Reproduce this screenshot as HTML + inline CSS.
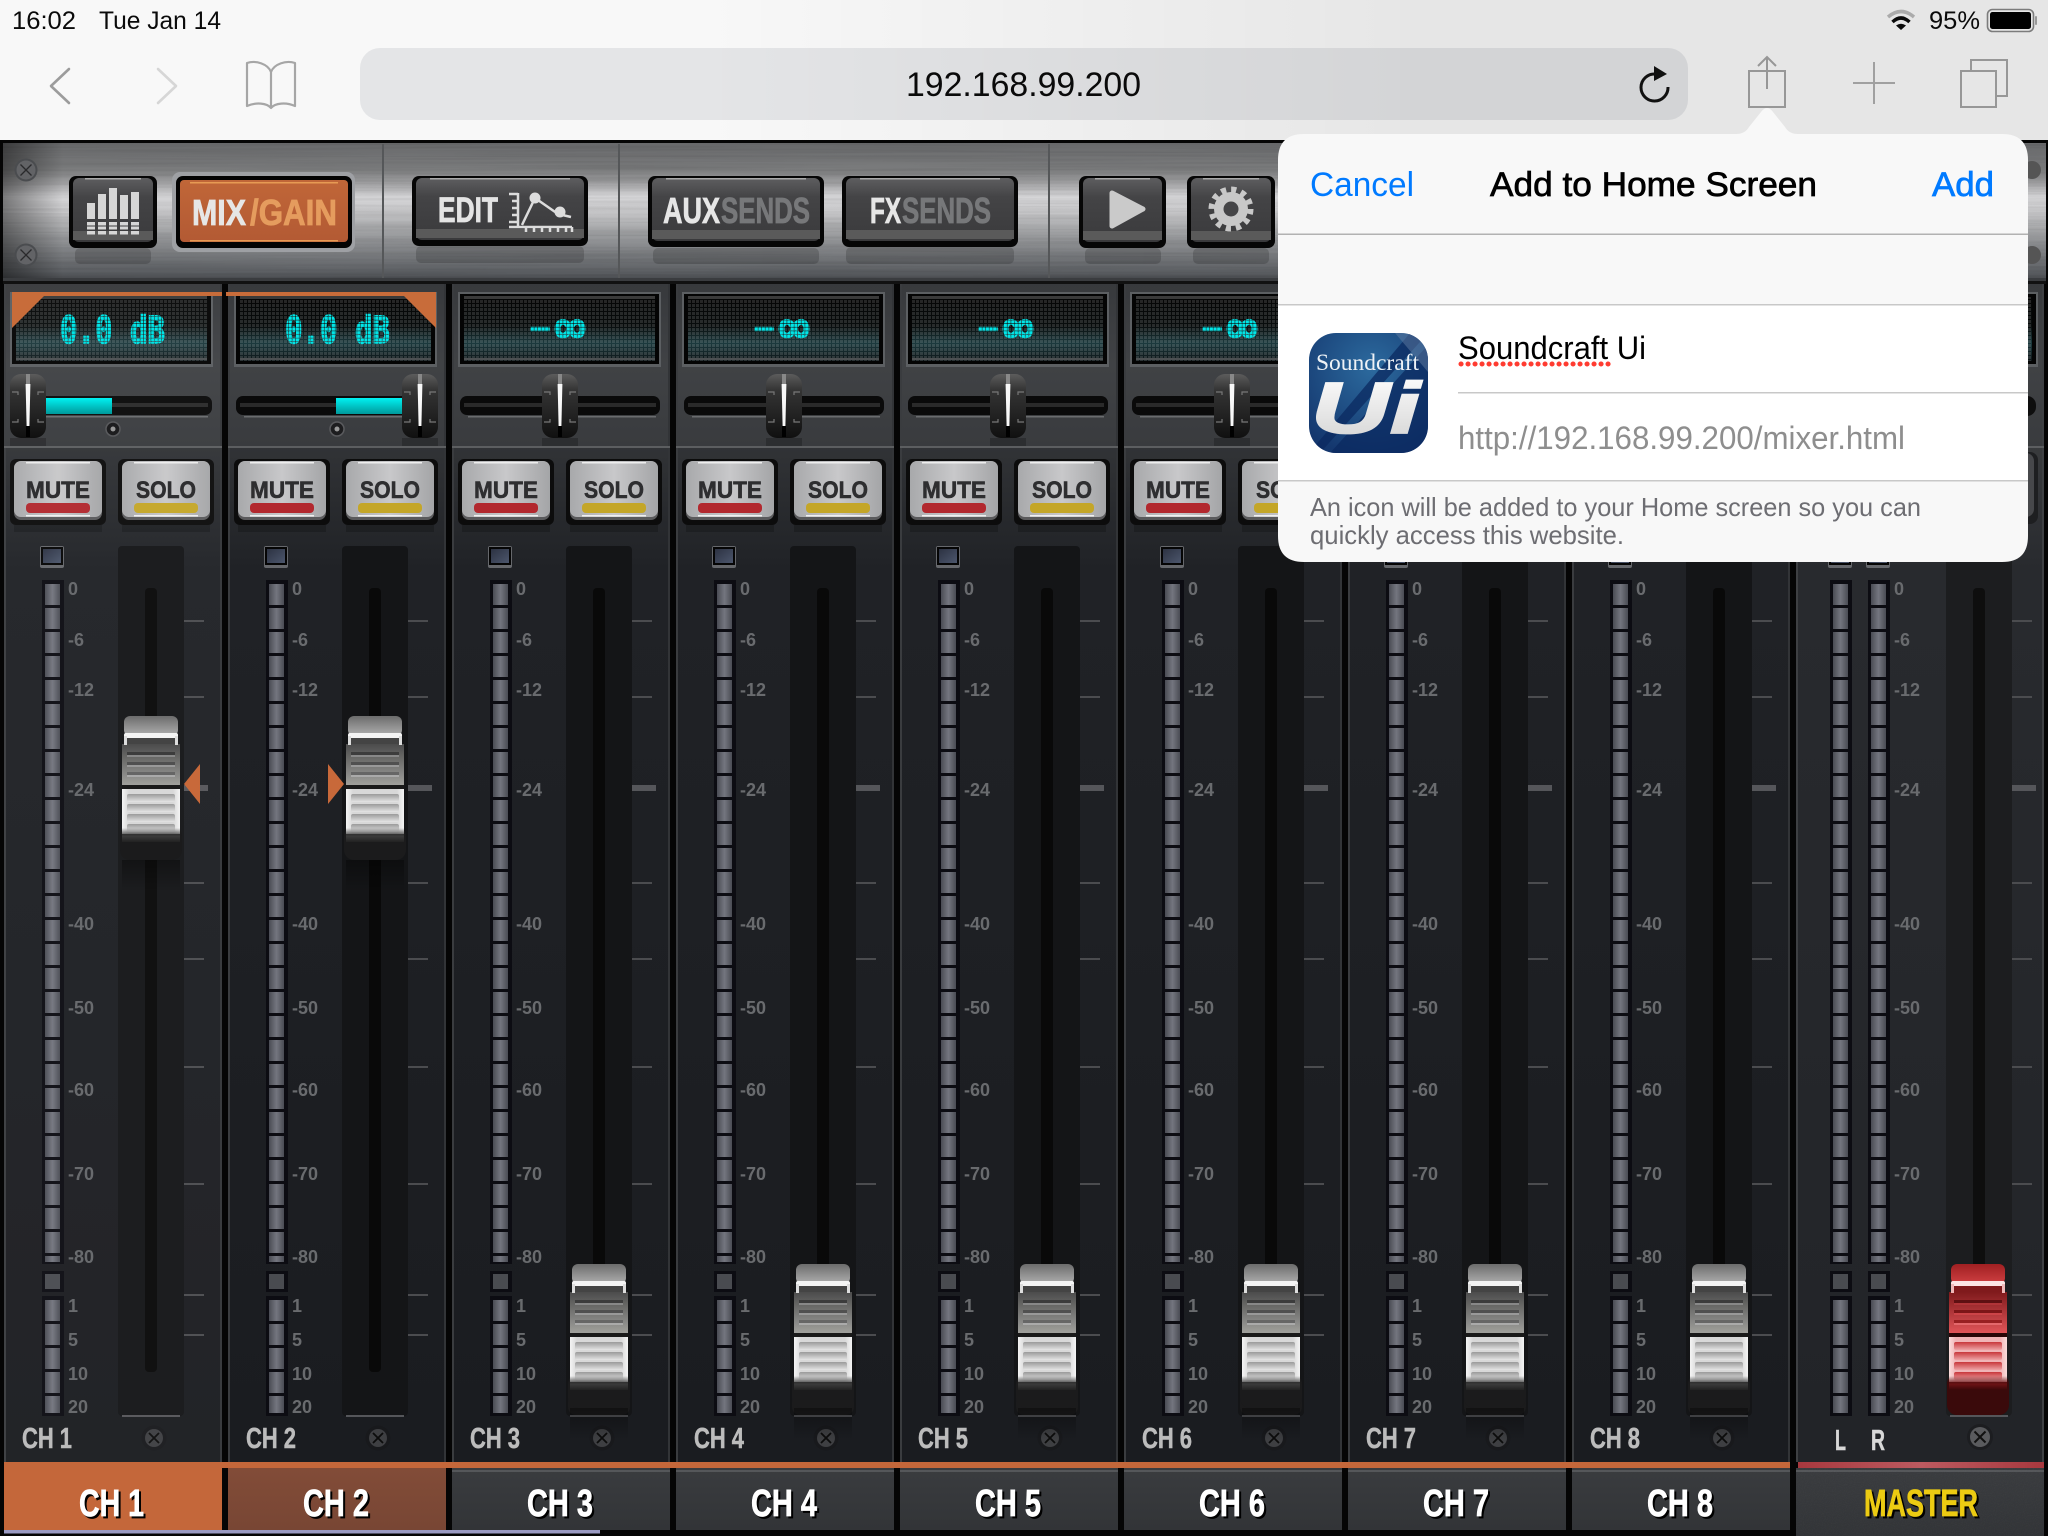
<!DOCTYPE html>
<html lang="en"><head><meta charset="utf-8"><title>Soundcraft Ui</title>
<style>
html,body{margin:0;padding:0;background:#050505;width:2048px;height:1536px;overflow:hidden}
svg{display:block}
text{font-family:"Liberation Sans",sans-serif}
.n{font-family:"Liberation Sans Narrow","Liberation Sans",sans-serif;font-weight:700}
.s{font-weight:700;font-size:18px;fill:#696b6e}
.mu{font-weight:700;font-size:24px;fill:#2e2e30;stroke:#2e2e30;stroke-width:.6}
.lb{font-size:29px;fill:#bcbcbc;stroke:#bcbcbc;stroke-width:.5}
.tb{font-size:38px;fill:#fff;stroke:#fff;stroke-width:.7;filter:drop-shadow(2.5px 2.5px 0 #000)}
.lcd{font-family:"DejaVu Sans Mono","Liberation Mono",monospace;font-weight:700;fill:url(#dots);stroke:url(#dots);stroke-width:1.4}
.hb{font-size:36px;stroke-width:.8}
</style></head><body>
<svg xmlns="http://www.w3.org/2000/svg" width="2048" height="1536" viewBox="0 0 2048 1536">
<defs>
<linearGradient id="metal" x1="0" y1="0" x2="0" y2="1"><stop offset="0" stop-color="#68696b"/><stop offset=".2" stop-color="#7c7d7e"/><stop offset=".3" stop-color="#a4a4a6"/><stop offset=".39" stop-color="#d6d6d8"/><stop offset=".5" stop-color="#c8c8ca"/><stop offset=".62" stop-color="#a8a9ab"/><stop offset=".76" stop-color="#86888b"/><stop offset=".95" stop-color="#5a5d61"/><stop offset="1" stop-color="#46484c"/></linearGradient>
<linearGradient id="metalL" x1="0" y1="0" x2="1" y2="0"><stop offset="0" stop-color="#000" stop-opacity=".42"/><stop offset="1" stop-color="#000" stop-opacity="0"/></linearGradient>
<linearGradient id="dim" x1="0" y1="0" x2="1" y2="0"><stop offset="0" stop-color="#000" stop-opacity="0"/><stop offset="1" stop-color="#000" stop-opacity=".07"/></linearGradient>
<filter id="brush" x="0" y="0" width="100%" height="100%"><feTurbulence type="fractalNoise" baseFrequency=".004 .45" numOctaves="2" seed="4"/><feColorMatrix values="0 0 0 0 0 0 0 0 0 0 0 0 0 0 0 1.6 0 0 0 -.55"/></filter>
<filter id="grain" x="0" y="0" width="100%" height="100%"><feTurbulence type="fractalNoise" baseFrequency=".9" numOctaves="2" seed="2"/><feColorMatrix values="0 0 0 0 1 0 0 0 0 1 0 0 0 0 1 .9 0 0 0 -.35"/></filter>
<linearGradient id="btn" x1="0" y1="0" x2="0" y2="1"><stop offset="0" stop-color="#5e5e60"/><stop offset=".3" stop-color="#444446"/><stop offset="1" stop-color="#3a3a3c"/></linearGradient>
<linearGradient id="btnO" x1="0" y1="0" x2="0" y2="1"><stop offset="0" stop-color="#c06638"/><stop offset="1" stop-color="#b35a34"/></linearGradient>
<linearGradient id="topbg" x1="0" y1="0" x2="0" y2="1"><stop offset="0" stop-color="#37393c"/><stop offset=".5" stop-color="#404245"/><stop offset="1" stop-color="#393b3e"/></linearGradient>
<linearGradient id="botbg" x1="0" y1="0" x2="0" y2="1"><stop offset="0" stop-color="#313336"/><stop offset=".12" stop-color="#202226"/><stop offset="1" stop-color="#1a1c20"/></linearGradient>
<linearGradient id="lcdg" x1="0" y1="0" x2="0" y2="1"><stop offset="0" stop-color="#050505"/><stop offset=".45" stop-color="#080c0c"/><stop offset=".72" stop-color="#1c3a3e"/><stop offset="1" stop-color="#0c1315"/></linearGradient>
<pattern id="grid" width="4" height="4" patternUnits="userSpaceOnUse"><rect width="3" height="3" fill="#fff" opacity=".13"/></pattern>
<pattern id="dots" width="3.6" height="3.6" patternUnits="userSpaceOnUse"><rect width="3" height="3" fill="#00e6e8"/></pattern>
<linearGradient id="cy" x1="0" y1="0" x2="0" y2="1"><stop offset="0" stop-color="#00f2f2"/><stop offset="1" stop-color="#00999b"/></linearGradient>
<linearGradient id="silver" x1="0" y1="0" x2="1" y2="0"><stop offset="0" stop-color="#a8a9ab"/><stop offset=".5" stop-color="#c8c8ca"/><stop offset="1" stop-color="#a4a5a7"/></linearGradient>
<linearGradient id="kn" x1="0" y1="0" x2="0" y2="1"><stop offset="0" stop-color="#5c5c5c"/><stop offset=".25" stop-color="#343434"/><stop offset=".6" stop-color="#242424"/><stop offset="1" stop-color="#101010"/></linearGradient>
<linearGradient id="mt" x1="0" y1="0" x2="1" y2="0"><stop offset="0" stop-color="#4a4c54"/><stop offset=".5" stop-color="#74767f"/><stop offset="1" stop-color="#4a4c54"/></linearGradient>
<pattern id="seg" x="45" y="584" width="15" height="24" patternUnits="userSpaceOnUse"><rect width="15" height="21" fill="url(#mt)"/></pattern>
<pattern id="seg2" x="45" y="1300" width="15" height="24" patternUnits="userSpaceOnUse"><rect width="15" height="21" fill="url(#mt)"/></pattern>
<linearGradient id="led" x1="0" y1="0" x2="1" y2="1"><stop offset="0" stop-color="#2c3242"/><stop offset="1" stop-color="#4c566c"/></linearGradient>
<linearGradient id="kc" x1="0" y1="0" x2="0" y2="1"><stop offset="0" stop-color="#6c6c6c"/><stop offset="1" stop-color="#b0b0b0"/></linearGradient>
<linearGradient id="ku" x1="0" y1="0" x2="0" y2="1"><stop offset="0" stop-color="#4c4c4c"/><stop offset="1" stop-color="#a0a09c"/></linearGradient>
<linearGradient id="kl" x1="0" y1="0" x2="1" y2="0"><stop offset="0" stop-color="#f4f4f4"/><stop offset=".12" stop-color="#d8d8d8"/><stop offset=".88" stop-color="#d8d8d8"/><stop offset="1" stop-color="#f4f4f4"/></linearGradient>
<linearGradient id="kr" x1="0" y1="0" x2="0" y2="1"><stop offset="0" stop-color="#9a9a9a"/><stop offset="1" stop-color="#e4e4e4"/></linearGradient>
<linearGradient id="kf" x1="0" y1="0" x2="0" y2="1"><stop offset="0" stop-color="#333" stop-opacity="0"/><stop offset=".6" stop-color="#3a3a3a"/><stop offset="1" stop-color="#222"/></linearGradient>
<linearGradient id="ks" x1="0" y1="0" x2="0" y2="1"><stop offset="0" stop-color="#000" stop-opacity=".35"/><stop offset="1" stop-color="#000" stop-opacity="0"/></linearGradient>
<linearGradient id="rc" x1="0" y1="0" x2="0" y2="1"><stop offset="0" stop-color="#a02022"/><stop offset="1" stop-color="#d04042"/></linearGradient>
<linearGradient id="ru" x1="0" y1="0" x2="0" y2="1"><stop offset="0" stop-color="#801a1c"/><stop offset="1" stop-color="#e05458"/></linearGradient>
<linearGradient id="rl" x1="0" y1="0" x2="1" y2="0"><stop offset="0" stop-color="#fbdcdc"/><stop offset=".12" stop-color="#f0b4b6"/><stop offset=".88" stop-color="#f0b4b6"/><stop offset="1" stop-color="#fbdcdc"/></linearGradient>
<linearGradient id="rr" x1="0" y1="0" x2="0" y2="1"><stop offset="0" stop-color="#c8373b"/><stop offset="1" stop-color="#eea4a6"/></linearGradient>
<linearGradient id="rf" x1="0" y1="0" x2="0" y2="1"><stop offset="0" stop-color="#5a1012" stop-opacity="0"/><stop offset=".6" stop-color="#6a1214"/><stop offset="1" stop-color="#3a0809"/></linearGradient>
<linearGradient id="tab" x1="0" y1="0" x2="0" y2="1"><stop offset="0" stop-color="#3a3c3f"/><stop offset="1" stop-color="#323437"/></linearGradient>
<linearGradient id="tab2" x1="0" y1="0" x2="0" y2="1"><stop offset="0" stop-color="#824c38"/><stop offset="1" stop-color="#784634"/></linearGradient>
<linearGradient id="redb" x1="0" y1="0" x2="1" y2="0"><stop offset="0" stop-color="#a8383e"/><stop offset=".5" stop-color="#bc5a60"/><stop offset="1" stop-color="#a8383e"/></linearGradient>
<radialGradient id="ic" cx="1372" cy="368" r="90" gradientUnits="userSpaceOnUse"><stop offset="0" stop-color="#2c6a9e"/><stop offset="1" stop-color="#14376e"/></radialGradient>
<linearGradient id="ui" x1="0" y1="0" x2="0" y2="1"><stop offset="0" stop-color="#fff"/><stop offset="1" stop-color="#d2d2d2"/></linearGradient>
<clipPath id="icc"><rect x="1309" y="333" width="119" height="120" rx="27"/></clipPath>

<g id="knob">
<rect x="-29" y="144" width="58" height="32" fill="url(#ks)"/>
<rect x="-31" y="110" width="62" height="34" rx="10" fill="#1b1b1c"/>
<rect x="-27" y="0" width="54" height="20" rx="6" fill="url(#kc)"/>
<rect x="-29" y="28" width="58" height="41" fill="url(#ku)"/>
<rect x="-24" y="36" width="48" height="3" fill="#3c3c3c"/><rect x="-24" y="39" width="48" height="2" fill="#888"/>
<rect x="-24" y="46" width="48" height="3" fill="#505050"/><rect x="-24" y="49" width="48" height="2" fill="#999"/>
<rect x="-24" y="56" width="48" height="3" fill="#666"/><rect x="-24" y="59" width="48" height="2" fill="#aaa"/>
<rect x="-27" y="17" width="54" height="5" rx="2" fill="#f4f4f4"/><rect x="-27" y="20" width="3" height="9" fill="#ddd"/><rect x="24" y="20" width="3" height="9" fill="#ddd"/><rect x="-24" y="22" width="48" height="6" fill="#444"/>
<rect x="-29" y="69" width="58" height="4" fill="#1a1a1a"/>
<rect x="-29" y="73" width="58" height="45" fill="url(#kl)"/>
<rect x="-24" y="78" width="48" height="8" rx="2" fill="url(#kr)"/><rect x="-24" y="88" width="48" height="8" rx="2" fill="url(#kr)"/><rect x="-24" y="98" width="48" height="8" rx="2" fill="url(#kr)"/><rect x="-24" y="108" width="48" height="8" rx="2" fill="url(#kr)"/>
<rect x="-29" y="112" width="58" height="14" fill="url(#kf)"/>
</g>
<g id="kb"><rect x="-31" y="125" width="62" height="26" rx="8" fill="#1b1b1c"/><use href="#knob"/></g>
<g id="knobr">
<rect x="-31" y="110" width="62" height="41" rx="10" fill="#3a0a0b"/>
<rect x="-27" y="0" width="54" height="20" rx="6" fill="url(#rc)"/>
<rect x="-29" y="28" width="58" height="41" fill="url(#ru)"/>
<rect x="-24" y="36" width="48" height="3" fill="#5e1012"/><rect x="-24" y="39" width="48" height="2" fill="#b03438"/>
<rect x="-24" y="46" width="48" height="3" fill="#7c1618"/><rect x="-24" y="49" width="48" height="2" fill="#cc4448"/>
<rect x="-24" y="56" width="48" height="3" fill="#982022"/><rect x="-24" y="59" width="48" height="2" fill="#e4686c"/>
<rect x="-27" y="17" width="54" height="5" rx="2" fill="#fde4e4"/><rect x="-27" y="20" width="3" height="9" fill="#f0b8b8"/><rect x="24" y="20" width="3" height="9" fill="#f0b8b8"/><rect x="-24" y="22" width="48" height="6" fill="#801a1c"/>
<rect x="-29" y="69" width="58" height="4" fill="#2a0607"/>
<rect x="-29" y="73" width="58" height="45" fill="url(#rl)"/>
<rect x="-24" y="78" width="48" height="8" rx="2" fill="url(#rr)"/><rect x="-24" y="88" width="48" height="8" rx="2" fill="url(#rr)"/><rect x="-24" y="98" width="48" height="8" rx="2" fill="url(#rr)"/><rect x="-24" y="108" width="48" height="8" rx="2" fill="url(#rr)"/>
<rect x="-29" y="112" width="58" height="14" fill="url(#rf)"/>
</g>
<g id="pk">
<rect x="-18" y="438" width="36" height="8" fill="#000" opacity=".22"/>
<rect x="-18" y="374" width="36" height="64" rx="11" fill="url(#kn)"/>
<path d="M-2.400 384H2.400L1.400 426H-1.400Z" fill="#f8f8f8"/><rect x="-2" y="426" width="4" height="11" fill="#000"/><rect x="-2" y="374" width="4" height="10" fill="#888"/>
<path d="M-16 392h6v3M16 392h-6v3M-16 422h6v-3M16 422h-6v-3" fill="none" stroke="#777" stroke-width="1.200"/>
</g>
<g id="screw"><circle r="12.500" fill="#18191c"/><circle r="9" fill="#3e3f42"/><path d="M-5-5 5 5M5-5-5 5" stroke="#0c0c0c" stroke-width="1.800"/></g>
<g id="hscrew"><circle r="11.500" fill="#4a4c4f"/><circle r="9.500" fill="#626366"/><path d="M-5.500-5.500 5.500 5.500M5.500-5.500-5.500 5.500" stroke="#2a2a2c" stroke-width="1.300"/></g>
<g id="meter">
<rect x="42" y="580" width="22" height="684" fill="#0c0c12"/><rect x="45" y="584" width="15" height="678" fill="url(#seg)"/>
<rect x="42" y="1271" width="22" height="21" fill="#0c0c12"/><rect x="45" y="1274" width="15" height="15" fill="#494b50"/>
<rect x="42" y="1296" width="22" height="120" fill="#0c0c12"/><rect x="45" y="1300" width="15" height="113" fill="url(#seg2)"/>
<rect x="40" y="546" width="24" height="22" rx="2" fill="#66686c"/><rect x="41" y="547" width="22" height="18" fill="#050505"/><rect x="43" y="549" width="18" height="14" fill="url(#led)"/>
</g>
<g id="ticks" fill="#4b4c4f">
<rect x="184" y="620" width="20" height="2"/><rect x="184" y="696" width="20" height="2"/><rect x="184" y="785" width="24" height="6" fill="#55565a"/><rect x="184" y="882" width="20" height="2"/><rect x="184" y="958" width="20" height="2"/><rect x="184" y="1066" width="20" height="2"/><rect x="184" y="1183" width="20" height="2"/><rect x="184" y="1294" width="20" height="2"/><rect x="184" y="1334" width="20" height="2"/>
</g>
<g id="lcdb">
<rect x="10" y="292" width="203" height="75" fill="#5c5f62"/>
<rect x="12" y="294" width="199" height="70" fill="#040404"/>
<rect x="16" y="297" width="191" height="64" fill="url(#lcdg)"/>
<rect x="16" y="297" width="191" height="64" fill="url(#grid)"/>
<rect x="16" y="296" width="191" height="3" fill="#3a3a3a"/>
<rect x="16" y="358" width="191" height="2" fill="#4c5052"/>
</g>
<g id="strip">
<rect x="4" y="284" width="218" height="162" fill="url(#topbg)"/>
<rect x="4" y="447" width="218" height="1015" fill="url(#botbg)"/>
<rect x="4" y="284" width="2" height="1178" fill="#3a3c3f"/><rect x="220" y="284" width="2" height="1178" fill="#323437"/>
<rect x="4" y="446" width="218" height="2" fill="#5c5e60"/>
<use href="#lcdb"/>
<rect x="12" y="396" width="200" height="19" rx="7" fill="#0a0a0a"/><rect x="16" y="403" width="192" height="4" fill="#2a2a2a"/>
<rect x="20" y="416" width="188" height="1.500" fill="#6a6c6e"/>
<rect x="14" y="525" width="88" height="7" fill="#000" opacity=".2"/><rect x="122" y="525" width="88" height="7" fill="#000" opacity=".2"/>
<rect x="10" y="459" width="96" height="66" rx="6" fill="#0c0c0c"/><rect x="118" y="459" width="96" height="66" rx="6" fill="#0c0c0c"/>
<rect x="14" y="461" width="88" height="59" rx="7" fill="#5a5a5c"/><rect x="122" y="461" width="88" height="59" rx="7" fill="#5a5a5c"/>
<rect x="14" y="461" width="88" height="56" rx="7" fill="url(#silver)"/><rect x="122" y="461" width="88" height="56" rx="7" fill="url(#silver)"/>
<rect x="26" y="462" width="64" height="1.500" fill="#eee"/><rect x="134" y="462" width="64" height="1.500" fill="#eee"/><rect x="26" y="515" width="64" height="1.500" fill="#f0f0f0"/><rect x="134" y="515" width="64" height="1.500" fill="#f0f0f0"/>
<rect x="26" y="503" width="64" height="10" rx="4" fill="#b2282e"/><rect x="134" y="503" width="64" height="10" rx="4" fill="#c4a628"/>
<use href="#meter"/>
<rect x="118" y="546" width="66" height="870" rx="4" fill="#141517"/>
<rect x="122" y="1415" width="58" height="2" fill="#55565a"/>
<rect x="145" y="588" width="12" height="784" rx="4" fill="#090909"/>
<use href="#ticks"/>
<use href="#screw" x="154" y="1438"/>
<rect x="4" y="1468" width="218" height="62" fill="url(#tab)"/>
<rect x="4" y="1470" width="218" height="2" fill="#55575a"/>
</g>
</defs>

<rect width="2048" height="1536" fill="#050505"/>

<!-- header -->
<rect x="3" y="143" width="2043" height="137" fill="url(#metal)"/>
<rect x="3" y="143" width="2043" height="137" filter="url(#brush)" opacity=".09"/>
<rect x="3" y="143" width="60" height="137" fill="url(#metalL)"/>
<rect x="3" y="278" width="2043" height="3" fill="#3a3c3f"/>
<rect x="382" y="144" width="2" height="134" fill="#555759"/><rect x="618" y="144" width="2" height="134" fill="#555759"/><rect x="1048" y="144" width="2" height="134" fill="#555759"/>
<use href="#hscrew" x="26" y="170"/><use href="#hscrew" x="26" y="255"/>
<circle cx="2032" cy="170" r="9" fill="#555"/><circle cx="2032" cy="255" r="9" fill="#555"/>
<!-- button reflections -->
<g fill="#000" opacity=".17"><rect x="75" y="248" width="76" height="16" rx="5"/><rect x="416" y="246" width="168" height="17" rx="5"/><rect x="653" y="248" width="166" height="16" rx="5"/><rect x="846" y="247" width="168" height="17" rx="5"/><rect x="1085" y="248" width="76" height="16" rx="5"/><rect x="1193" y="248" width="76" height="16" rx="5"/></g>
<!-- bars button -->
<rect x="69" y="176" width="88" height="72" rx="7" fill="#060606"/><rect x="73" y="178" width="80" height="64" rx="6" fill="url(#btn)"/><rect x="73" y="231" width="80" height="9" fill="#5a5a5a"/><rect x="85" y="178" width="56" height="1.500" fill="#aaa"/>
<g fill="#d6d6d6"><rect x="87" y="203" width="8" height="16"/><rect x="98" y="194" width="8" height="25"/><rect x="109" y="188" width="8" height="31"/><rect x="120" y="195" width="8" height="24"/><rect x="131" y="192" width="8" height="27"/>
<rect x="87" y="222" width="8" height="3.500"/><rect x="98" y="222" width="8" height="3.500"/><rect x="109" y="222" width="8" height="3.500"/><rect x="120" y="222" width="8" height="3.500"/><rect x="131" y="222" width="8" height="3.500"/>
<rect x="87" y="226.500" width="8" height="3"/><rect x="98" y="226.500" width="8" height="3"/><rect x="109" y="226.500" width="8" height="3"/><rect x="120" y="226.500" width="8" height="3"/><rect x="131" y="226.500" width="8" height="3"/>
<rect x="87" y="231" width="8" height="3.500"/><rect x="98" y="231" width="8" height="3.500"/><rect x="109" y="231" width="8" height="3.500"/><rect x="120" y="231" width="8" height="3.500"/><rect x="131" y="231" width="8" height="3.500"/></g>
<!-- mix gain -->
<rect x="172" y="172" width="183" height="80" rx="8" fill="#9ea0a4"/><rect x="176" y="176" width="176" height="72" rx="7" fill="#030303"/><rect x="180" y="180" width="168" height="62" rx="4" fill="url(#btnO)"/>
<rect x="190" y="182" width="148" height="1.500" fill="#e79a54"/><rect x="190" y="240" width="148" height="1.500" fill="#e79a54"/>
<text class="n hb" x="192" y="225" textLength="54" lengthAdjust="spacingAndGlyphs" fill="#e6e6e6" stroke="#e6e6e6">MIX</text>
<text class="n hb" x="250" y="225" textLength="87" lengthAdjust="spacingAndGlyphs" fill="#e59c5e" stroke="#e59c5e">/GAIN</text>
<!-- edit -->
<rect x="412" y="176" width="176" height="70" rx="7" fill="#060606"/><rect x="416" y="178" width="168" height="62" rx="6" fill="url(#btn)"/><rect x="416" y="229" width="168" height="9" fill="#5a5a5a"/><rect x="430" y="178" width="140" height="1.500" fill="#aaa"/>
<text class="n" font-size="35" x="438" y="222" textLength="60" lengthAdjust="spacingAndGlyphs" fill="#e4e4e4" stroke="#e4e4e4" stroke-width=".8">EDIT</text>
<path d="M518 193V227H572M509 194h9M512 201h6M512 208h6M512 215h6M509 222h9M526 227v5M534 227v5M542 227v5M550 227v5M558 227v5M566 227v5M572 227v5M509 227h9" fill="none" stroke="#dcdcdc" stroke-width="2.500"/>
<path d="M522 225L535 198L558 214L571 217" fill="none" stroke="#dcdcdc" stroke-width="2.500"/><circle cx="535" cy="198" r="5.500" fill="#dcdcdc"/><circle cx="560" cy="212" r="5.500" fill="#dcdcdc"/>
<!-- aux -->
<rect x="648" y="176" width="176" height="71" rx="7" fill="#060606"/><rect x="652" y="178" width="168" height="63" rx="6" fill="url(#btn)"/><rect x="652" y="230" width="168" height="9" fill="#5a5a5a"/><rect x="666" y="178" width="140" height="1.500" fill="#aaa"/>
<text class="n hb" x="663" y="223" textLength="57" lengthAdjust="spacingAndGlyphs" fill="#e6e6e6" stroke="#e6e6e6">AUX</text>
<text class="n hb" x="721" y="223" textLength="89" lengthAdjust="spacingAndGlyphs" fill="#77787a" stroke="#77787a">SENDS</text>
<!-- fx -->
<rect x="842" y="176" width="176" height="71" rx="7" fill="#060606"/><rect x="846" y="178" width="168" height="63" rx="6" fill="url(#btn)"/><rect x="846" y="230" width="168" height="9" fill="#5a5a5a"/><rect x="860" y="178" width="140" height="1.500" fill="#aaa"/>
<text class="n hb" x="870" y="223" textLength="31" lengthAdjust="spacingAndGlyphs" fill="#e6e6e6" stroke="#e6e6e6">FX</text>
<text class="n hb" x="902" y="223" textLength="89" lengthAdjust="spacingAndGlyphs" fill="#77787a" stroke="#77787a">SENDS</text>
<!-- play -->
<rect x="1079" y="176" width="87" height="72" rx="7" fill="#060606"/><rect x="1083" y="178" width="79" height="64" rx="6" fill="url(#btn)"/><rect x="1083" y="231" width="79" height="9" fill="#5a5a5a"/><rect x="1095" y="178" width="55" height="1.500" fill="#aaa"/>
<path d="M1112 193L1143 209L1112 226Z" fill="#cacaca" stroke="#cacaca" stroke-width="5" stroke-linejoin="round"/>
<!-- gear -->
<rect x="1187" y="176" width="88" height="72" rx="7" fill="#060606"/><rect x="1191" y="178" width="80" height="64" rx="6" fill="url(#btn)"/><rect x="1191" y="231" width="80" height="9" fill="#5a5a5a"/><rect x="1203" y="178" width="56" height="1.500" fill="#aaa"/>
<circle cx="1231" cy="209" r="17" fill="#c8c8c8"/><circle cx="1231" cy="209" r="19.500" fill="none" stroke="#c8c8c8" stroke-width="6" stroke-dasharray="5.200 5.010"/><circle cx="1231" cy="209" r="7.500" fill="#454547"/>

<!-- strips -->
<rect x="3" y="281" width="2043" height="3" fill="#111"/>
<use href="#strip"/><use href="#strip" x="224"/><use href="#strip" x="448"/><use href="#strip" x="672"/><use href="#strip" x="896"/><use href="#strip" x="1120"/><use href="#strip" x="1344"/><use href="#strip" x="1568"/>
<rect x="4" y="284" width="218" height="1178" fill="#fff" opacity=".035"/>

<!-- master strip -->
<rect x="1796" y="284" width="248" height="162" fill="url(#topbg)"/>
<rect x="1796" y="447" width="248" height="1015" fill="url(#botbg)"/>
<rect x="1796" y="447" width="248" height="1015" fill="#fff" opacity=".04"/>
<rect x="1796" y="284" width="2" height="1178" fill="#3e4043"/><rect x="2042" y="284" width="2" height="1178" fill="#3e4043"/>
<rect x="1796" y="446" width="248" height="2" fill="#5c5e60"/>
<rect x="1800" y="292" width="238" height="75" fill="#5c5f62"/><rect x="1802" y="294" width="234" height="70" fill="#040404"/><rect x="1806" y="297" width="226" height="64" fill="url(#lcdg)"/><rect x="1806" y="297" width="226" height="64" fill="url(#grid)"/>
<rect x="1990" y="396" width="46" height="20" rx="9" fill="#0e0e0e"/>
<rect x="1950" y="452" width="88" height="72" rx="8" fill="#1e1f21"/><rect x="1956" y="453" width="78" height="64" rx="8" fill="#47484b"/>
<use href="#meter" x="1788"/><use href="#meter" x="1826"/>
<rect x="1946" y="546" width="66" height="870" rx="4" fill="#1c1d1f"/><rect x="1950" y="1415" width="58" height="2" fill="#55565a"/>
<rect x="1973" y="588" width="12" height="784" rx="4" fill="#0e0e0e"/>
<use href="#ticks" x="1828"/>
<use href="#knobr" x="1978" y="1264"/>
<g transform="translate(1980,1437)"><circle r="13" fill="#1c1d20"/><circle r="10" fill="#5a5b5e"/><path d="M-5.500-5.500 5.500 5.500M5.500-5.500-5.500 5.500" stroke="#111" stroke-width="2"/></g>
<rect x="1796" y="1468" width="248" height="68" fill="url(#tab)"/><rect x="1796" y="1470" width="248" height="2" fill="#55575a"/>
<rect x="1796" y="1468" width="248" height="68" filter="url(#grain)" opacity=".06"/>
<rect x="1798" y="1462" width="246" height="6" fill="url(#redb)"/>
<rect x="2044" y="1462" width="4" height="74" fill="#050505"/>
<text class="n lb" x="1835" y="1450" textLength="11" lengthAdjust="spacingAndGlyphs" style="fill:#d8d8d8;stroke:#d8d8d8">L</text>
<text class="n lb" x="1871" y="1450" textLength="14" lengthAdjust="spacingAndGlyphs" style="fill:#d8d8d8;stroke:#d8d8d8">R</text>
<text class="n tb" x="1864" y="1516" textLength="114" lengthAdjust="spacingAndGlyphs" style="fill:#eccb12;stroke:#eccb12">MASTER</text>
<g transform="translate(1826,0)"><text class="s" x="68" y="595">0</text><text class="s" x="68" y="646">-6</text><text class="s" x="68" y="696">-12</text><text class="s" x="68" y="796">-24</text><text class="s" x="68" y="930">-40</text><text class="s" x="68" y="1014">-50</text><text class="s" x="68" y="1096">-60</text><text class="s" x="68" y="1180">-70</text><text class="s" x="68" y="1263">-80</text><text class="s" x="68" y="1312">1</text><text class="s" x="68" y="1346">5</text><text class="s" x="68" y="1380">10</text><text class="s" x="68" y="1413">20</text></g>

<!-- tabs -->
<rect x="4" y="1462" width="218" height="68" fill="#c4673a"/>
<rect x="228" y="1468" width="218" height="62" fill="url(#tab2)"/>
<rect x="4" y="1462" width="1786" height="6" fill="#c4673a"/>
<rect x="4" y="1530" width="596" height="3.500" fill="#9a9ac2"/>

<!-- selected channel corners / pan -->
<path d="M12 292H222V296H44L12 328Z" fill="#c86c3a"/>
<path d="M226 292H436V328L404 296H226Z" fill="#c86c3a"/>
<rect x="44" y="398" width="68" height="16" fill="url(#cy)"/>
<rect x="336" y="398" width="66" height="16" fill="url(#cy)"/>
<circle cx="113" cy="429" r="7" fill="#1d1d1f" stroke="#5a5b5e" stroke-width="1.500"/><circle cx="113" cy="429" r="2.500" fill="#999"/>
<circle cx="337" cy="429" r="7" fill="#1d1d1f" stroke="#5a5b5e" stroke-width="1.500"/><circle cx="337" cy="429" r="2.500" fill="#999"/>
<use href="#pk" x="28"/><use href="#pk" x="420"/><use href="#pk" x="560"/><use href="#pk" x="784"/><use href="#pk" x="1008"/><use href="#pk" x="1232"/>
<use href="#pk" x="1456"/><use href="#pk" x="1680"/>
<!-- faders -->
<use href="#knob" x="151" y="716"/><use href="#knob" x="375" y="716"/>
<use href="#kb" x="599" y="1264"/><use href="#kb" x="823" y="1264"/><use href="#kb" x="1047" y="1264"/><use href="#kb" x="1271" y="1264"/><use href="#kb" x="1495" y="1264"/><use href="#kb" x="1719" y="1264"/>
<path d="M184 784L200 764V804Z" fill="#c8693a"/><path d="M328 764L344 784L328 804Z" fill="#c8693a"/>

<!-- channel text -->
<g>
<text class="lcd" font-size="37" x="60" y="343" textLength="105" lengthAdjust="spacingAndGlyphs">0.0 dB</text>
<text class="mu" x="26" y="498" textLength="64" lengthAdjust="spacingAndGlyphs">MUTE</text><text class="mu" x="136" y="498" textLength="60" lengthAdjust="spacingAndGlyphs">SOLO</text>
<text class="s" x="68" y="595">0</text><text class="s" x="68" y="646">-6</text><text class="s" x="68" y="696">-12</text><text class="s" x="68" y="796">-24</text><text class="s" x="68" y="930">-40</text><text class="s" x="68" y="1014">-50</text><text class="s" x="68" y="1096">-60</text><text class="s" x="68" y="1180">-70</text><text class="s" x="68" y="1263">-80</text><text class="s" x="68" y="1312">1</text><text class="s" x="68" y="1346">5</text><text class="s" x="68" y="1380">10</text><text class="s" x="68" y="1413">20</text>
<text class="n lb" x="22" y="1448" textLength="50" lengthAdjust="spacingAndGlyphs">CH 1</text><text class="n tb" x="79" y="1516" textLength="65" lengthAdjust="spacingAndGlyphs">CH 1</text>
</g>
<g transform="translate(224,0)">
<text class="lcd" font-size="37" x="61" y="343" textLength="105" lengthAdjust="spacingAndGlyphs">0.0 dB</text>
<text class="mu" x="26" y="498" textLength="64" lengthAdjust="spacingAndGlyphs">MUTE</text><text class="mu" x="136" y="498" textLength="60" lengthAdjust="spacingAndGlyphs">SOLO</text>
<text class="s" x="68" y="595">0</text><text class="s" x="68" y="646">-6</text><text class="s" x="68" y="696">-12</text><text class="s" x="68" y="796">-24</text><text class="s" x="68" y="930">-40</text><text class="s" x="68" y="1014">-50</text><text class="s" x="68" y="1096">-60</text><text class="s" x="68" y="1180">-70</text><text class="s" x="68" y="1263">-80</text><text class="s" x="68" y="1312">1</text><text class="s" x="68" y="1346">5</text><text class="s" x="68" y="1380">10</text><text class="s" x="68" y="1413">20</text>
<text class="n lb" x="22" y="1448" textLength="50" lengthAdjust="spacingAndGlyphs">CH 2</text><text class="n tb" x="79" y="1516" textLength="66" lengthAdjust="spacingAndGlyphs">CH 2</text>
</g>
<g transform="translate(448,0)">
<text class="lcd" font-size="26" x="83" y="336" textLength="18" lengthAdjust="spacingAndGlyphs">—</text><text class="lcd" font-size="46" x="107" y="343" textLength="30" lengthAdjust="spacingAndGlyphs">∞</text>
<text class="mu" x="26" y="498" textLength="64" lengthAdjust="spacingAndGlyphs">MUTE</text><text class="mu" x="136" y="498" textLength="60" lengthAdjust="spacingAndGlyphs">SOLO</text>
<text class="s" x="68" y="595">0</text><text class="s" x="68" y="646">-6</text><text class="s" x="68" y="696">-12</text><text class="s" x="68" y="796">-24</text><text class="s" x="68" y="930">-40</text><text class="s" x="68" y="1014">-50</text><text class="s" x="68" y="1096">-60</text><text class="s" x="68" y="1180">-70</text><text class="s" x="68" y="1263">-80</text><text class="s" x="68" y="1312">1</text><text class="s" x="68" y="1346">5</text><text class="s" x="68" y="1380">10</text><text class="s" x="68" y="1413">20</text>
<text class="n lb" x="22" y="1448" textLength="50" lengthAdjust="spacingAndGlyphs">CH 3</text><text class="n tb" x="79" y="1516" textLength="66" lengthAdjust="spacingAndGlyphs">CH 3</text>
</g>
<g transform="translate(672,0)">
<text class="lcd" font-size="26" x="83" y="336" textLength="18" lengthAdjust="spacingAndGlyphs">—</text><text class="lcd" font-size="46" x="107" y="343" textLength="30" lengthAdjust="spacingAndGlyphs">∞</text>
<text class="mu" x="26" y="498" textLength="64" lengthAdjust="spacingAndGlyphs">MUTE</text><text class="mu" x="136" y="498" textLength="60" lengthAdjust="spacingAndGlyphs">SOLO</text>
<text class="s" x="68" y="595">0</text><text class="s" x="68" y="646">-6</text><text class="s" x="68" y="696">-12</text><text class="s" x="68" y="796">-24</text><text class="s" x="68" y="930">-40</text><text class="s" x="68" y="1014">-50</text><text class="s" x="68" y="1096">-60</text><text class="s" x="68" y="1180">-70</text><text class="s" x="68" y="1263">-80</text><text class="s" x="68" y="1312">1</text><text class="s" x="68" y="1346">5</text><text class="s" x="68" y="1380">10</text><text class="s" x="68" y="1413">20</text>
<text class="n lb" x="22" y="1448" textLength="50" lengthAdjust="spacingAndGlyphs">CH 4</text><text class="n tb" x="79" y="1516" textLength="66" lengthAdjust="spacingAndGlyphs">CH 4</text>
</g>
<g transform="translate(896,0)">
<text class="lcd" font-size="26" x="83" y="336" textLength="18" lengthAdjust="spacingAndGlyphs">—</text><text class="lcd" font-size="46" x="107" y="343" textLength="30" lengthAdjust="spacingAndGlyphs">∞</text>
<text class="mu" x="26" y="498" textLength="64" lengthAdjust="spacingAndGlyphs">MUTE</text><text class="mu" x="136" y="498" textLength="60" lengthAdjust="spacingAndGlyphs">SOLO</text>
<text class="s" x="68" y="595">0</text><text class="s" x="68" y="646">-6</text><text class="s" x="68" y="696">-12</text><text class="s" x="68" y="796">-24</text><text class="s" x="68" y="930">-40</text><text class="s" x="68" y="1014">-50</text><text class="s" x="68" y="1096">-60</text><text class="s" x="68" y="1180">-70</text><text class="s" x="68" y="1263">-80</text><text class="s" x="68" y="1312">1</text><text class="s" x="68" y="1346">5</text><text class="s" x="68" y="1380">10</text><text class="s" x="68" y="1413">20</text>
<text class="n lb" x="22" y="1448" textLength="50" lengthAdjust="spacingAndGlyphs">CH 5</text><text class="n tb" x="79" y="1516" textLength="66" lengthAdjust="spacingAndGlyphs">CH 5</text>
</g>
<g transform="translate(1120,0)">
<text class="lcd" font-size="26" x="83" y="336" textLength="18" lengthAdjust="spacingAndGlyphs">—</text><text class="lcd" font-size="46" x="107" y="343" textLength="30" lengthAdjust="spacingAndGlyphs">∞</text>
<text class="mu" x="26" y="498" textLength="64" lengthAdjust="spacingAndGlyphs">MUTE</text><text class="mu" x="136" y="498" textLength="60" lengthAdjust="spacingAndGlyphs">SOLO</text>
<text class="s" x="68" y="595">0</text><text class="s" x="68" y="646">-6</text><text class="s" x="68" y="696">-12</text><text class="s" x="68" y="796">-24</text><text class="s" x="68" y="930">-40</text><text class="s" x="68" y="1014">-50</text><text class="s" x="68" y="1096">-60</text><text class="s" x="68" y="1180">-70</text><text class="s" x="68" y="1263">-80</text><text class="s" x="68" y="1312">1</text><text class="s" x="68" y="1346">5</text><text class="s" x="68" y="1380">10</text><text class="s" x="68" y="1413">20</text>
<text class="n lb" x="22" y="1448" textLength="50" lengthAdjust="spacingAndGlyphs">CH 6</text><text class="n tb" x="79" y="1516" textLength="66" lengthAdjust="spacingAndGlyphs">CH 6</text>
</g>
<g transform="translate(1344,0)">
<text class="s" x="68" y="595">0</text><text class="s" x="68" y="646">-6</text><text class="s" x="68" y="696">-12</text><text class="s" x="68" y="796">-24</text><text class="s" x="68" y="930">-40</text><text class="s" x="68" y="1014">-50</text><text class="s" x="68" y="1096">-60</text><text class="s" x="68" y="1180">-70</text><text class="s" x="68" y="1263">-80</text><text class="s" x="68" y="1312">1</text><text class="s" x="68" y="1346">5</text><text class="s" x="68" y="1380">10</text><text class="s" x="68" y="1413">20</text>
<text class="n lb" x="22" y="1448" textLength="50" lengthAdjust="spacingAndGlyphs">CH 7</text><text class="n tb" x="79" y="1516" textLength="66" lengthAdjust="spacingAndGlyphs">CH 7</text>
</g>
<g transform="translate(1568,0)">
<text class="s" x="68" y="595">0</text><text class="s" x="68" y="646">-6</text><text class="s" x="68" y="696">-12</text><text class="s" x="68" y="796">-24</text><text class="s" x="68" y="930">-40</text><text class="s" x="68" y="1014">-50</text><text class="s" x="68" y="1096">-60</text><text class="s" x="68" y="1180">-70</text><text class="s" x="68" y="1263">-80</text><text class="s" x="68" y="1312">1</text><text class="s" x="68" y="1346">5</text><text class="s" x="68" y="1380">10</text><text class="s" x="68" y="1413">20</text>
<text class="n lb" x="22" y="1448" textLength="50" lengthAdjust="spacingAndGlyphs">CH 8</text><text class="n tb" x="79" y="1516" textLength="66" lengthAdjust="spacingAndGlyphs">CH 8</text>
</g>

<!-- safari chrome -->
<rect width="2048" height="140" fill="#f8f8f8"/>
<rect x="360" y="48" width="1328" height="72" rx="20" fill="#e4e5e7"/>
<rect x="700" y="0" width="700" height="140" fill="url(#dim)"/><rect x="1400" y="0" width="648" height="140" fill="#000" opacity=".07"/>
<text x="12" y="29" font-size="25" textLength="64" lengthAdjust="spacingAndGlyphs" fill="#0a0a0a">16:02</text>
<text x="99" y="29" font-size="25" textLength="122" lengthAdjust="spacingAndGlyphs" fill="#0a0a0a">Tue Jan 14</text>
<text x="906" y="96" font-size="34" textLength="235" lengthAdjust="spacingAndGlyphs" fill="#0a0a0a">192.168.99.200</text>
<path d="M69 69L51 86L69 103" fill="none" stroke="#9c9c9c" stroke-width="2.600" stroke-linecap="round" stroke-linejoin="round"/>
<path d="M158 69L176 86L158 103" fill="none" stroke="#d6d6d6" stroke-width="2.600" stroke-linecap="round" stroke-linejoin="round"/>
<path d="M271 72C268 64 256 60 247 63V106C256 102 267 103 271 108C275 103 286 102 295 106V63C286 60 274 64 271 72V108" fill="none" stroke="#a6a6a6" stroke-width="2.200" stroke-linejoin="round"/>
<path d="M1655 74A13.500 13.500 0 1 0 1668 87" fill="none" stroke="#111" stroke-width="3"/><path d="M1654 66L1667 74L1654 81Z" fill="#111"/>
<rect x="1749" y="71" width="36" height="36" fill="none" stroke="#979797" stroke-width="2"/><path d="M1767 89V57M1758 66L1767 57L1776 66" fill="none" stroke="#979797" stroke-width="2"/>
<path d="M1853 83H1895M1874 62V104" fill="none" stroke="#a0a0a0" stroke-width="2"/>
<rect x="1961" y="71" width="35" height="36" fill="none" stroke="#979797" stroke-width="2"/><path d="M1971 70V60H2007V96H1997" fill="none" stroke="#979797" stroke-width="2"/>
<path d="M1888 17Q1901 6 1914 17" fill="none" stroke="#ababab" stroke-width="3.500"/>
<path d="M1892.500 22Q1901 14 1909.500 22" fill="none" stroke="#0a0a0a" stroke-width="3.500"/>
<path d="M1896 25.500Q1901 22 1906 25.500L1901 30Z" fill="#0a0a0a"/>
<text x="1929" y="29" font-size="25" textLength="51" lengthAdjust="spacingAndGlyphs" fill="#0a0a0a">95%</text>
<rect x="1987.500" y="9.500" width="46" height="22" rx="5" fill="none" stroke="#7c7c7c" stroke-width="1.600"/><rect x="1990" y="12" width="41" height="17" rx="2.500" fill="#000"/><rect x="2035" y="16" width="2" height="9" rx="1" fill="#999"/>

<!-- popover -->
<path d="M1304 134H1736Q1745 134 1749 127L1761 112Q1767 104 1773 112L1785 127Q1789 134 1798 134H2002Q2028 134 2028 160V536Q2028 562 2002 562H1304Q1278 562 1278 536V160Q1278 134 1304 134Z" fill="#f8f8f8"/>
<rect x="1278" y="305" width="750" height="175" fill="#fff"/>
<rect x="1278" y="233.500" width="750" height="1.500" fill="#b2b2b2"/><rect x="1278" y="304" width="750" height="1.500" fill="#c8c8c8"/><rect x="1278" y="480" width="750" height="1.500" fill="#c8c8c8"/><rect x="1458" y="392" width="570" height="1.500" fill="#c8c8c8"/>
<text x="1310" y="196" font-size="34" textLength="104" lengthAdjust="spacingAndGlyphs" fill="#007aff">Cancel</text>
<text x="1490" y="196" font-size="34" textLength="327" lengthAdjust="spacingAndGlyphs" fill="#000" stroke="#000" stroke-width=".7">Add to Home Screen</text>
<text x="1932" y="196" font-size="34" textLength="62" lengthAdjust="spacingAndGlyphs" fill="#007aff" stroke="#007aff" stroke-width=".7">Add</text>
<text x="1458" y="359" font-size="32" textLength="188" lengthAdjust="spacingAndGlyphs" fill="#000">Soundcraft Ui</text>
<path d="M1461 364H1610" fill="none" stroke="#ff3b30" stroke-width="5" stroke-linecap="round" stroke-dasharray=".1 6.900"/>
<text x="1458" y="449" font-size="32" textLength="447" lengthAdjust="spacingAndGlyphs" fill="#8e8e8e">http://192.168.99.200/mixer.html</text>
<text x="1310" y="516" font-size="26" textLength="611" lengthAdjust="spacingAndGlyphs" fill="#6d6d72">An icon will be added to your Home screen so you can</text>
<text x="1310" y="544" font-size="26" textLength="314" lengthAdjust="spacingAndGlyphs" fill="#6d6d72">quickly access this website.</text>
<g clip-path="url(#icc)">
<rect x="1309" y="333" width="119" height="120" fill="url(#ic)"/>
<path d="M1428 333V345L1330 453H1428ZM1309 453L1410 333H1428L1320 453Z" fill="#0b2a60" opacity=".75"/>
<path d="M1395 333H1428V372Z" fill="#6a86a8" opacity=".45"/>
<text x="1316" y="370" font-size="23" textLength="103" lengthAdjust="spacingAndGlyphs" fill="#eef2f6" style="font-family:'Liberation Serif',serif">Soundcraft</text>
<text x="1311" y="433" font-size="72" font-weight="700" font-style="italic" textLength="109" lengthAdjust="spacingAndGlyphs" fill="url(#ui)" stroke="url(#ui)" stroke-width="1.800">Ui</text>
</g>
</svg>
</body></html>
